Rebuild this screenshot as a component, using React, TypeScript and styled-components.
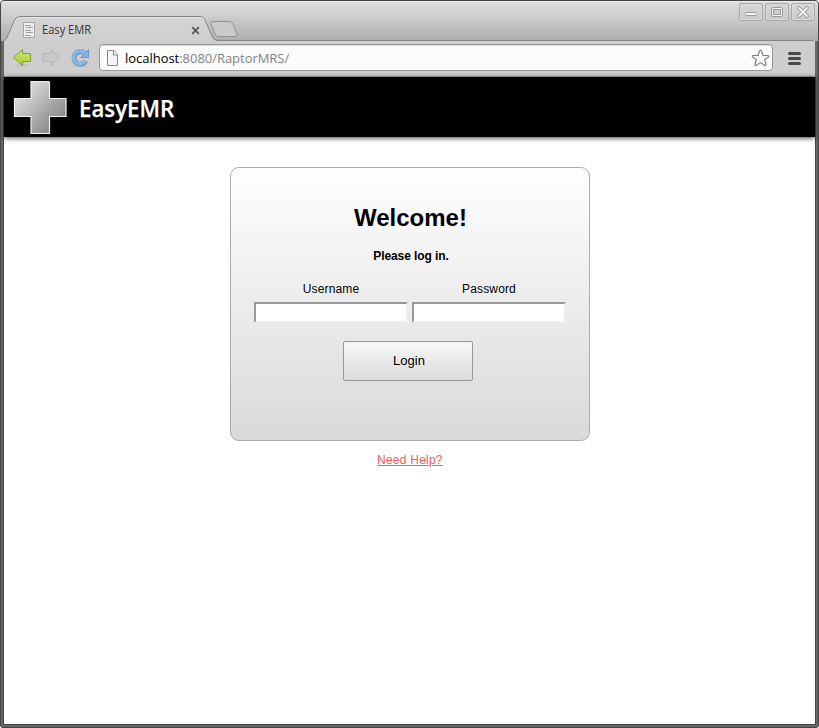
import React from "react";
import styled, { createGlobalStyle } from "styled-components";

const GlobalStyle = createGlobalStyle`
  html, body { margin: 0; padding: 0; background: #fff; overflow: hidden; }
  * { box-sizing: border-box; }
`;

const BrowserWindow = styled.div`
  width: 819px;
  height: 728px;
  display: flex;
  flex-direction: column;
  padding: 0 3px 2px;
  background: #666663;
  border: 1px solid #454543;
  border-radius: 4px 4px 3px 3px;
  overflow: hidden;
  font-family: "Liberation Sans", Arial, sans-serif;
`;

const TitleBar = styled.div`
  height: 40px;
  flex: none;
  display: flex;
  justify-content: space-between;
  margin: 0 -3px;
  background: linear-gradient(#dedede, #cecece 35%, #adadad);
  border-top: 1px solid #e9e9e9;
  position: relative;
`;

const TabArt = styled.svg`
  position: absolute;
  left: 0;
  top: 13px;
`;

const Tab = styled.div`
  position: relative;
  display: flex;
  align-items: center;
  width: 206px;
  height: 26px;
  margin-top: 15px;
  padding-left: 21px;
`;

const TabTitle = styled.span`
  width: 150px;
  margin-left: 6px;
  flex: none;
  font: 12px/16px "Open Sans", sans-serif;
  color: #353535;
  transform: scaleX(0.925);
  transform-origin: left;
`;

const TabClose = styled.svg`
  margin-left: -1px;
  flex: none;
`;

const WindowControls = styled.div`
  display: flex;
  gap: 2px;
  padding: 1px 3px 0 0;
`;

const ControlButton = styled.span`
  width: 24px;
  height: 18px;
  display: grid;
  place-items: center;
  border: 1px solid #a9a9a9;
  border-radius: 2px;
  background: linear-gradient(#d8d8d8, #c9c9c9);
  box-shadow: inset 0 0 0 1px #d9d9d9;
`;

const Toolbar = styled.div`
  height: 36px;
  flex: none;
  display: flex;
  align-items: center;
  padding: 0 13px 2px 8px;
  background: #cecece;
  border-bottom: 1px solid #a7a7a7;
`;

const NavIcon = styled.svg<{ $gap: number }>`
  flex: none;
  margin-right: ${(p) => p.$gap}px;
`;

const AddressBar = styled.div`
  width: 674px;
  height: 27px;
  display: flex;
  align-items: center;
  padding: 0 2px 0 6px;
  background: #fcfcfc;
  border: 1px solid #969696;
  border-radius: 4px;
  box-shadow: inset 0 1px 1px #d9d9d9;
`;

const Url = styled.span`
  flex: 1;
  margin-left: 6px;
  font: 13px/18px "Open Sans", sans-serif;
  letter-spacing: -0.03px;
  color: #838383;
  white-space: nowrap;
`;

const Host = styled.span`
  color: #000;
`;

const MenuIcon = styled.svg`
  margin-left: 14px;
  flex: none;
`;

const Viewport = styled.main`
  flex: 1;
  background: #fff;
  border: 0 solid #454543;
  border-bottom-width: 1px;
  box-shadow: -1px 0 #454543, 1px 0 #454543;
`;

const SiteHeader = styled.header`
  height: 60px;
  display: flex;
  align-items: center;
  padding-left: 9px;
  background: #000;
  box-shadow: 0 1px 5px rgba(0, 0, 0, 0.75);
`;

const Brand = styled.span`
  margin: 2px 0 0 11px;
  color: #fff;
  font: 600 23px/30px "Open Sans", sans-serif;
  -webkit-text-stroke: 0.25px #fff;
  transform: scaleX(0.967);
  transform-origin: left;
`;

const LoginPanel = styled.form`
  width: 360px;
  height: 274px;
  margin: 30px auto 0 226px;
  display: flex;
  flex-direction: column;
  align-items: center;
  border: 1px solid #adadad;
  border-radius: 9px;
  background: linear-gradient(#fff, #d9d9d9);
`;

const Heading = styled.h1`
  margin: 36px 0 0 1px;
  font-size: 24px;
  line-height: 28px;
`;

const Prompt = styled.p`
  margin: 17px 0 0 2px;
  font-size: 12px;
  line-height: 14px;
  font-weight: bold;
  letter-spacing: -0.08px;
`;

const Fields = styled.div`
  display: flex;
  gap: 4px;
  margin-top: 19px;
`;

const Field = styled.label`
  width: 154px;
  display: flex;
  flex-direction: column;
  align-items: center;
  font-size: 12px;
  line-height: 14px;
  letter-spacing: 0.15px;
`;

const TextInput = styled.input`
  width: 154px;
  height: 21px;
  margin: 6px 0 0;
  padding: 1px;
  background: #fff;
  border: 2px solid;
  border-color: #999 #eee #eee #999;
  border-radius: 0;
  outline: none;
`;

const LoginButton = styled.button`
  width: 130px;
  height: 40px;
  margin: 18px 4px 0 0;
  padding: 0 0 1px 2px;
  border: 1px solid #969696;
  border-radius: 2px;
  background: linear-gradient(#f7f7f7, #dcdcdc);
  font: 13px "Liberation Sans", Arial, sans-serif;
  color: #000;
`;

const HelpLink = styled.a`
  display: block;
  width: max-content;
  margin: 12px 0 0 373px;
  color: #f95a5a;
  font-size: 12px;
  line-height: 14px;
  letter-spacing: 0.24px;
  text-decoration: underline;
`;

function TabBackground() {
  return (
    <TabArt width="817" height="26" viewBox="0 0 817 26">
      <defs>
        <linearGradient id="tabFill" x2="0" y2="1">
          <stop stopColor="#d4d4d4" />
          <stop offset="1" stopColor="#cecece" />
        </linearGradient>
      </defs>
      <path
        d="M3 27V26Q6 24 8 18L13 6Q15 1.500 19 1.500H199Q203 1.500 204.500 6L211 21Q213 25.500 216 25.500H811Q813.500 25.500 814 28Z"
        fill="url(#tabFill)"
        stroke="#858585"
      />
      <path d="M14 7Q16 2.500 19 2.500H199Q202 2.500 203 5" fill="none" stroke="#e6e6e6" />
      <path
        d="M212 6.500H228Q231 6.500 232 9L235.500 18Q236.500 21.500 233 21.500H218Q215 21.500 214 19L210 9Q209 6.500 212 6.500Z"
        fill="#cacaca"
        stroke="#929292"
      />
    </TabArt>
  );
}

function PageIcon() {
  return (
    <svg width="13" height="16" viewBox="0 0 13 16">
      <path d="M1.500 .5H8L11.500 4.500V15.500H1.500Z" fill="#f5f5f5" stroke="#888" />
      <path d="M7.500 .5V5H11.500" fill="#fff" stroke="#888" />
    </svg>
  );
}

export default function App() {
  return (
    <>
      <GlobalStyle />
      <BrowserWindow>
        <TitleBar>
          <TabBackground />
          <Tab>
            <svg width="14" height="16" viewBox="0 0 14 16">
              <path d="M1.500 .5H12.500V15.500H1.500Z" fill="#eee" stroke="#a4a4a4" />
              <path d="M3 3.500H9M4 5.500H11M3 8.500H9M4 10.500H11M3 13.500H9" stroke="#9c9c9c" strokeWidth="1.200" />
            </svg>
            <TabTitle>Easy EMR</TabTitle>
            <TabClose width="9" height="9" viewBox="0 0 9 9">
              <path d="M1.200 1.200 7.800 7.800M7.800 1.200 1.200 7.800" stroke="#555" strokeWidth="1.700" />
            </TabClose>
          </Tab>
          <WindowControls>
            <ControlButton>
              <svg width="13" height="12" viewBox="0 0 13 12">
                <rect x=".5" y="6.500" width="11" height="3" rx="1" fill="#f4f4f4" stroke="#999" />
              </svg>
            </ControlButton>
            <ControlButton>
              <svg width="12" height="10" viewBox="0 0 12 10">
                <rect x=".5" y=".5" width="11" height="9" rx="1.500" fill="#f4f4f4" stroke="#999" />
                <rect x="2.500" y="2.500" width="7" height="5" fill="#ccc" stroke="#999" />
              </svg>
            </ControlButton>
            <ControlButton>
              <svg width="12" height="12" viewBox="0 0 12 12">
                <path d="M2 2 10 10M10 2 2 10" stroke="#929292" strokeWidth="3.600" strokeLinecap="round" />
                <path d="M2 2 10 10M10 2 2 10" stroke="#f7f7f7" strokeWidth="1.800" strokeLinecap="round" />
              </svg>
            </ControlButton>
          </WindowControls>
        </TitleBar>

        <Toolbar>
          <NavIcon $gap={9} width="20" height="20" viewBox="0 0 20 20">
            <defs>
              <linearGradient id="backFill" x2="0" y2="1">
                <stop stopColor="#d5e97e" />
                <stop offset="1" stopColor="#a4cd22" />
              </linearGradient>
            </defs>
            <ellipse cx="11" cy="17.500" rx="8" ry="1.200" fill="#c2c2c2" />
            <path d="M1.500 9.500 10.500 1.500V5.500H18.500V13.500H10.500V17.500Z" fill="url(#backFill)" stroke="#77a13d" />
          </NavIcon>
          <NavIcon $gap={9} width="20" height="20" viewBox="0 0 20 20">
            <path d="M18.500 9.500 10.500 1.500V5.500H1.500V13.500H10.500V17.500Z" fill="#c8c8c5" stroke="#b5b5b2" />
          </NavIcon>
          <NavIcon $gap={9} width="20" height="20" viewBox="0 0 20 20">
            <ellipse cx="10" cy="18" rx="7" ry="1.200" fill="#bebebe" />
            <path d="M15.800 12.800A6.300 6.300 0 1 1 14.500 5" fill="none" stroke="#6799cb" strokeWidth="5" />
            <path d="M18.500 1.500V9.500H10.500Z" fill="#83b3df" stroke="#6799cb" />
            <path d="M15.300 12.500A6.300 6.300 0 1 1 14.800 5.300" fill="none" stroke="#8bb9e3" strokeWidth="3.200" />
          </NavIcon>
          <AddressBar>
            <PageIcon />
            <Url>
              <Host>localhost</Host>:8080/RaptorMRS/
            </Url>
            <svg width="19" height="18" viewBox="0 0 19 18">
              <path
                d="M9.500 1.200Q10.200 1.200 10.700 2.600L12 6.400L16.800 6.500Q18.500 6.800 17.200 8L13.600 10.800L15 15.200Q15.200 17 13.800 16.400L9.500 13.600L5.200 16.400Q3.800 17 4 15.200L5.400 10.800L1.800 8Q.5 6.800 2.200 6.500L7 6.400L8.300 2.600Q8.800 1.200 9.500 1.200Z"
                fill="#fff"
                stroke="#808080"
                strokeWidth="1.200"
              />
            </svg>
          </AddressBar>
          <MenuIcon width="15" height="14" viewBox="0 0 15 14">
            <path d="M2.500 2.500H12.500M2.500 7.500H12.500M2.500 12.500H12.500" stroke="#484848" strokeWidth="3" strokeLinecap="round" />
          </MenuIcon>
        </Toolbar>

        <Viewport>
          <SiteHeader>
            <svg width="55" height="56" viewBox="0 0 55 56">
              <defs>
                <linearGradient id="crossFill" x2="1" y2="1">
                  <stop offset=".15" stopColor="#dedede" />
                  <stop offset=".85" stopColor="#858585" />
                </linearGradient>
              </defs>
              <path
                d="M18 2.500H35.500Q36.500 2.500 36.500 3.500V19.500H53V37.500H36.500V54.500H18V37.500H1.500V19.500H18Z"
                fill="url(#crossFill)"
                stroke="#f0f0f0"
                strokeWidth="1.200"
              />
            </svg>
            <Brand>EasyEMR</Brand>
          </SiteHeader>
          <LoginPanel onSubmit={(e) => e.preventDefault()}>
            <Heading>Welcome!</Heading>
            <Prompt>Please log in.</Prompt>
            <Fields>
              <Field>
                Username
                <TextInput type="text" />
              </Field>
              <Field>
                Password
                <TextInput type="password" />
              </Field>
            </Fields>
            <LoginButton type="submit">Login</LoginButton>
          </LoginPanel>
          <HelpLink href="#">Need Help?</HelpLink>
        </Viewport>
      </BrowserWindow>
    </>
  );
}
